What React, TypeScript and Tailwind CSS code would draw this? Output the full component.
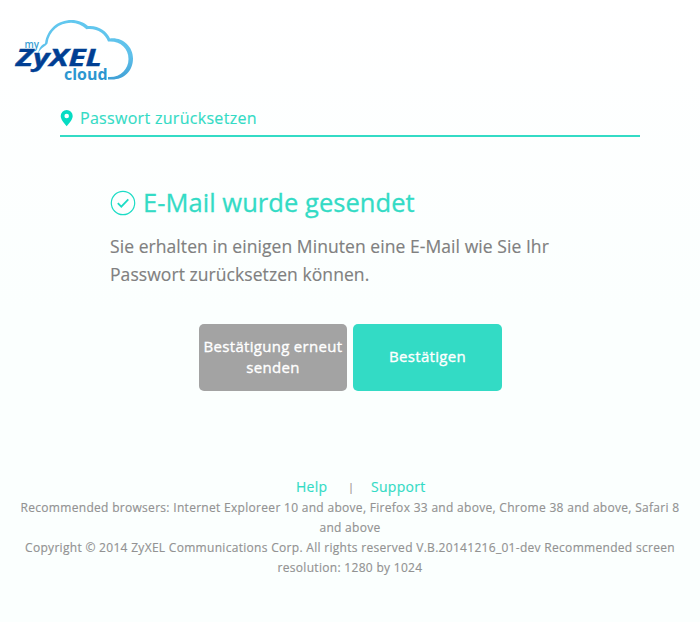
import React from "react";

function Logo() {
  return (
    <svg width="140" height="90" viewBox="0 0 140 90" className="block" aria-label="my ZyXEL cloud">
      <defs>
        <linearGradient id="cloud" x1="0" y1="0" x2="0" y2="1">
          <stop offset="0" stopColor="#62c8ef" />
          <stop offset="0.6" stopColor="#5ec0ea" />
          <stop offset="1" stopColor="#3fa0d6" />
        </linearGradient>
      </defs>
      <path
        fill="url(#cloud)"
        d="M37.5 54 C39 50 40 45 45 43.5 C47 29 58 20 71.5 20 C78 20 84 22.5 88 26 C98 25 107 31 110 38.5 C122 37 133 46 133 58.5 C133 71 124 79.500 112 79.500 L108 79.500 L108 77 C120 78 128.500 69.500 128.500 59 C128.500 48 120 40.500 108 41.500 C105 33.500 97 28 86.500 29.300 C82 25 77 22.800 71 22.800 C59 22.800 49 31 47.500 43.500 C46 46 42 46.500 37.5 54 Z"
      />
      <text x="24.500" y="48" textLength="14.500" lengthAdjust="spacingAndGlyphs" fontFamily="Open Sans, sans-serif" fontWeight="600" fontSize="10.500" letterSpacing="0" fill="#3a9fd5">my</text>
      <text x="16" y="66" textLength="86" lengthAdjust="spacingAndGlyphs" fontFamily="Open Sans, sans-serif" fontWeight="700" fontStyle="italic" fontSize="23" letterSpacing="0" fill="#003f93" stroke="#003f93" strokeWidth="0.4">ZyXEL</text>
      <text x="64" y="79.500" textLength="43.500" lengthAdjust="spacingAndGlyphs" fontFamily="Open Sans, sans-serif" fontWeight="700" fontSize="15.500" letterSpacing="0" fill="#2c96d0">cloud</text>
    </svg>
  );
}

export default function App() {
  return (
    <div className="flex h-[622px] w-[700px] flex-col overflow-hidden bg-linear-to-b from-white via-[#fbfffe] to-[#fbfffe] font-['Open_Sans',sans-serif] tracking-[0.3px] [-webkit-text-stroke-width:0.15px]">
      <header className="h-[90px]">
        <Logo />
      </header>
      <main className="flex flex-col">
        <div className="mx-[60px] mt-[14px] flex h-[33px] items-center border-b-2 border-[#33dbc5] pb-[3px]">
          <svg width="13" height="17" viewBox="0 0 13 17" className="mr-[7px] shrink-0">
            <path fillRule="evenodd" fill="#05dcc3" d="M6.700 0 A6 6 0 0 0 0.700 6 C0.700 9.500 4 13 6.700 16.300 C9.400 13 12.700 9.500 12.700 6 A6 6 0 0 0 6.700 0 Z M6.700 3.700 A2.300 2.300 0 1 1 6.700 8.300 A2.300 2.300 0 1 1 6.700 3.700 Z" />
          </svg>
          <span className="whitespace-nowrap text-[16px] leading-[24px] text-[#33dbc5]">Passwort zurücksetzen</span>
        </div>
        <section className="ml-[110px] mt-[46px]">
          <div className="flex h-10 items-center">
            <svg width="26" height="26" viewBox="0 0 26 26" fill="none" className="mr-[7px] shrink-0">
              <circle cx="13" cy="13" r="11.700" stroke="#1bdcc5" strokeWidth="1.200" />
              <path d="M7.800 13.200 L11.300 16.700 L18.300 9.300" stroke="#1bdcc5" strokeWidth="1.800" />
            </svg>
            <h1 className="whitespace-nowrap text-[25.500px] leading-[38px] pb-0.5 tracking-[0.05px] text-[#33dbc5] [-webkit-text-stroke-width:0.3px]">E-Mail wurde gesendet</h1>
          </div>
          <p className="mt-[9px] whitespace-nowrap text-[17.500px] leading-7 tracking-[0.065px] text-[#808080]">
            Sie erhalten in einigen Minuten eine E-Mail wie Sie Ihr
            <br />
            Passwort zurücksetzen können.
          </p>
        </section>
        <div className="ml-[199px] mt-[36px] flex gap-[6px] text-[15px] leading-[21px] text-white [-webkit-text-stroke-width:0.35px]">
          <button className="h-[67px] w-[148px] whitespace-nowrap rounded-[5px] bg-[#a3a3a3] pb-0.5">
            Bestätigung erneut
            <br />
            senden
          </button>
          <button className="h-[67px] w-[149px] rounded-[5px] bg-[#33dbc5] pb-0.5">Bestätigen</button>
        </div>
      </main>
      <footer className="mt-[86px] text-center text-[12px] leading-5 text-[#929292]">
        <div className="ml-[296px] flex h-[21px] items-center pb-px text-[14px] text-[#33dbc5]">
          <a className="w-[52px] text-left">Help</a>
          <span className="w-[23px] text-left text-[11px] text-[#a08f93]">|</span>
          <a>Support</a>
        </div>
        <p className="whitespace-nowrap">
          Recommended browsers: Internet Exploreer 10 and above, Firefox 33 and above, Chrome 38 and above, Safari 8
          <br />
          and above
        </p>
        <p className="whitespace-nowrap">
          Copyright © 2014 ZyXEL Communications Corp. All rights reserved V.B.20141216_01-dev Recommended screen
          <br />
          resolution: 1280 by 1024
        </p>
      </footer>
    </div>
  );
}
